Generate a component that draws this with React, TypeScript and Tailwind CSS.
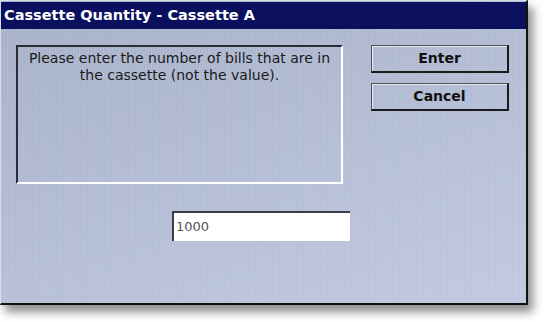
export default function App() {
  return (
    <div className="w-[546px] h-[322px] bg-white font-['DejaVu_Sans',Verdana,sans-serif]">
      {/* Window */}
      <div className="w-[528px] h-[305px] flex flex-col border-t border-l border-[#d8dce6] border-r-2 border-b-2 border-r-[#111] border-b-[#111] shadow-[5px_7px_9px_rgba(0,0,0,0.45)] bg-[linear-gradient(160deg,#a8b2ca_0%,#b6c0d8_55%,#c2cbe2_100%)]">
        {/* Title bar */}
        <div className="h-[27px] mt-px bg-[#0a105e] flex items-center pl-[3px] text-white font-bold text-[14.5px]">
          Cassette Quantity - Cassette A
        </div>

        {/* Body */}
        <div className="flex-1 flex pt-[16px] pl-[15px] bg-[repeating-linear-gradient(90deg,rgba(255,255,255,0.05)_0px,rgba(255,255,255,0.05)_1px,rgba(0,0,0,0.03)_2px,transparent_3px)]">
          <div className="w-[327px] flex flex-col">
            {/* Message box */}
            <div className="h-[139px] border-t-2 border-l-2 border-t-[#2a2e38] border-l-[#2a2e38] border-b-2 border-r-2 border-b-white border-r-white text-center text-[14px] leading-[17px] text-[#1a1a1a] pt-[3px] px-[4px]">
              Please enter the number of bills that are in the cassette (not the value).
            </div>

            {/* Input */}
            <div className="mt-[27px] ml-[156px] w-[178px] h-[30px] bg-white border-t-2 border-l-2 border-t-[#3a3e48] border-l-[#3a3e48] flex items-center pl-[2px] text-[13px] text-[#555]">
              1000
            </div>
          </div>

          {/* Buttons */}
          <div className="ml-[28px] w-[138px] flex flex-col gap-[10px]">
            <button className="h-[28px] border border-[#4a4e58] border-b-2 border-r-2 border-b-[#1a1a1a] border-r-[#1a1a1a] shadow-[inset_1px_1px_0_#e4e8f0] font-bold text-[14px] text-[#111]">
              Enter
            </button>
            <button className="h-[28px] border border-[#4a4e58] border-b-2 border-r-2 border-b-[#1a1a1a] border-r-[#1a1a1a] shadow-[inset_1px_1px_0_#e4e8f0] font-bold text-[14px] text-[#111]">
              Cancel
            </button>
          </div>
        </div>
      </div>
    </div>
  )
}
